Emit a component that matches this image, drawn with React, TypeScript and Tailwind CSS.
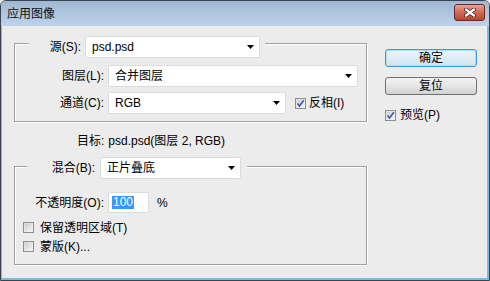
import React from "react";

const Arrow = () => (
  <svg width="7" height="4" viewBox="0 0 7 4" className="ml-auto mr-[5px] shrink-0">
    <polygon points="0,0 7,0 3.5,4" fill="#000" />
  </svg>
);

const Select = ({ value, className }: { value: string; className?: string }) => (
  <div
    className={`flex h-[22px] items-center rounded-[2px] border border-[#dcdcdc] bg-white pl-[6px] ${className ?? ""}`}
  >
    <span className="leading-none">{value}</span>
    <Arrow />
  </div>
);

const Check = ({ checked }: { checked?: boolean }) => (
  <div className="flex h-[11px] w-[11px] shrink-0 items-center justify-center border border-[#8e8f8f] bg-gradient-to-br from-[#dcdcdc] to-[#f8f8f8]">
    <div className="flex h-[7px] w-[7px] items-center justify-center bg-gradient-to-br from-[#cfcfcf] to-[#f4f4f4]">
      {checked && (
        <svg width="9" height="9" viewBox="0 0 9 9" className="shrink-0">
          <path d="M1.5 4.5 L3.5 7 L7.8 1.2" stroke="#2f5fb3" strokeWidth="1.6" fill="none" />
        </svg>
      )}
    </div>
  </div>
);

const Button = ({ label, primary }: { label: string; primary?: boolean }) => (
  <button
    className={`flex h-[18px] w-[92px] items-center justify-center rounded-[3px] border text-[12px] leading-none ${
      primary
        ? "border-[#3c9ad8] bg-gradient-to-b from-[#eef6fb] via-[#dfeef7] to-[#cde3f0] shadow-[inset_0_0_0_1px_#aee0f7]"
        : "border-[#707070] bg-gradient-to-b from-[#f2f2f2] via-[#e6e6e6] to-[#d2d2d2]"
    }`}
  >
    {label}
  </button>
);

const groupBox = "border border-[#a0a0a0] shadow-[1px_1px_0_#fff,inset_1px_1px_0_#fff]";

export default function App() {
  return (
    <div className="h-[281px] w-[490px] bg-[#ececec] font-['Liberation_Sans','Noto_Sans_CJK_SC',sans-serif] text-[12px] text-black">
      <div className="flex h-full flex-col overflow-hidden rounded-t-[6px] border border-[#3a4450]">
        {/* title bar */}
        <div className="flex h-[25px] shrink-0 items-center bg-gradient-to-b from-[#a1b8d3] to-[#bdd3eb] pl-[6px] pr-[4px]">
          <span className="mt-[1px] leading-none text-[#111]">应用图像</span>
          <div className="mb-[2px] ml-auto flex h-[17px] w-[31px] items-center justify-center rounded-[3px] border border-[#6b2a25] bg-gradient-to-b from-[#e8a395] via-[#cf6a55] to-[#bd432d]">
            <svg width="12" height="9" viewBox="0 0 12 9">
              <path d="M2 1.5 L10 7.5 M10 1.5 L2 7.5" stroke="#4a2a28" strokeWidth="4" strokeLinecap="round" />
              <path d="M2 1.5 L10 7.5 M10 1.5 L2 7.5" stroke="#fff" strokeWidth="2.2" strokeLinecap="round" />
            </svg>
          </div>
        </div>

        {/* body */}
        <div className="flex flex-1 border-b-2 border-l border-r-2 border-[#78bbe6] pl-[12px] pt-[2px]">
          <div className="flex w-[353px] flex-col">
            <fieldset className={`${groupBox} pb-[7px]`}>
              <legend className="ml-[14px] flex items-center bg-[#ececec] pr-[5px] pt-[8px] pl-[14px]">
                <span className="w-[38px] text-right leading-none">源(S):</span>
                <Select value="psd.psd" className="ml-[4px] w-[175px]" />
              </legend>
              <div className="mt-[7px] flex items-center">
                <span className="w-[89px] text-right leading-none">图层(L):</span>
                <Select value="合并图层" className="ml-[4px] w-[250px]" />
              </div>
              <div className="mt-[5px] flex items-center">
                <span className="w-[89px] text-right leading-none">通道(C):</span>
                <Select value="RGB" className="ml-[4px] w-[178px]" />
                <div className="ml-[9px]">
                  <Check checked />
                </div>
                <span className="ml-[3px] leading-none">反相(I)</span>
              </div>
            </fieldset>

            <div className="mt-[11px] flex h-[16px] items-center pl-[63px] leading-none">
              <span>目标:</span>
              <span className="ml-[4px]">psd.psd(图层 2, RGB)</span>
            </div>

            <fieldset className={`${groupBox} mt-[4px] pb-[8px]`}>
              <legend className="ml-[12px] flex items-center bg-[#ececec] pl-[4px] pr-[6px] pt-[4px]">
                <span className="w-[64px] text-right leading-none">混合(B):</span>
                <Select value="正片叠底" className="ml-[5px] w-[141px]" />
              </legend>
              <div className="mt-[13px] flex items-center">
                <span className="w-[89px] text-right leading-none">不透明度(O):</span>
                <div className="ml-[4px] flex h-[21px] w-[41px] items-center rounded-[2px] border border-[#dcdcdc] bg-white pl-[3px]">
                  <span className="bg-[#3399ff] px-[1px] leading-[13px] text-white">100</span>
                </div>
                <span className="ml-[8px] leading-none">%</span>
              </div>
              <div className="mt-[5px] flex h-[19px] items-center pl-[8px]">
                <Check />
                <span className="ml-[6px] leading-none">保留透明区域(T)</span>
              </div>
              <div className="flex h-[19px] items-center pl-[8px]">
                <Check />
                <span className="ml-[6px] leading-none">蒙版(K)...</span>
              </div>
            </fieldset>
          </div>

          <div className="ml-[18px] mt-[21px] flex flex-col">
            <Button label="确定" primary />
            <div className="mt-[10px]">
              <Button label="复位" />
            </div>
            <div className="mt-[12px] flex h-[16px] items-center">
              <Check checked />
              <span className="ml-[4px] leading-none">预览(P)</span>
            </div>
          </div>
        </div>
      </div>
    </div>
  );
}
